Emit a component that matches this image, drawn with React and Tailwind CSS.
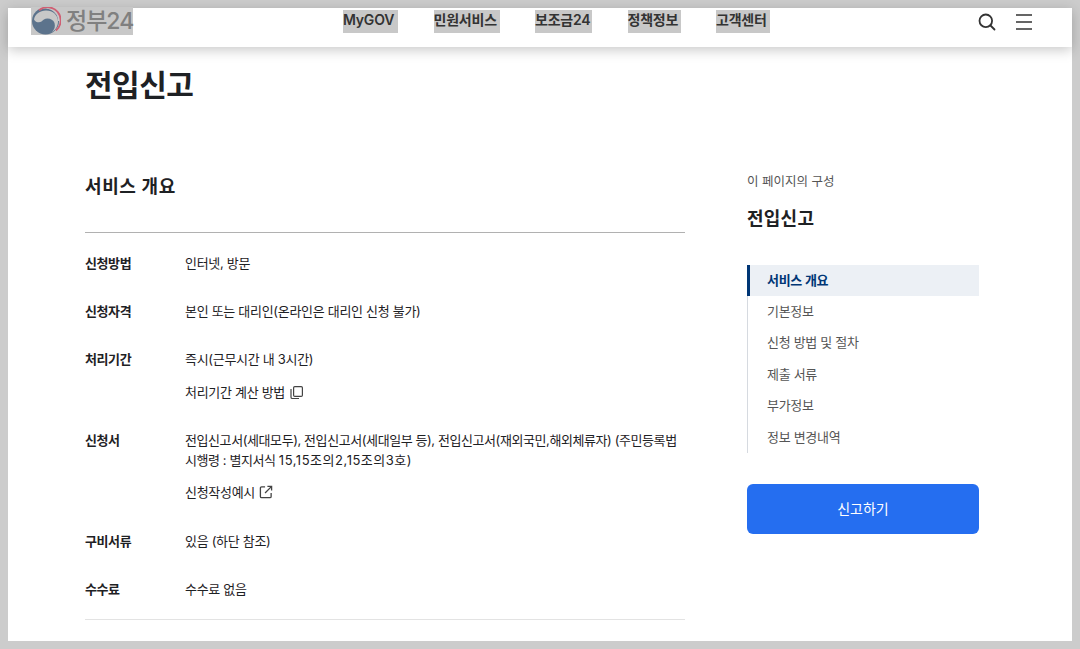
import React from "react";

const NAV = [
  { label: "MyGOV", width: "w-[55px]" },
  { label: "민원서비스", width: "w-[66px]" },
  { label: "보조금24", width: "w-[57px]" },
  { label: "정책정보", width: "w-[53px]" },
  { label: "고객센터", width: "w-[54px]" },
];
const TOC = ["기본정보", "신청 방법 및 절차", "제출 서류", "부가정보", "정보 변경내역"];

const CopyIcon = () => (
  <svg width="15" height="15" viewBox="0 0 15 15" fill="none" stroke="#444" strokeWidth="1.2" className="shrink-0">
    <rect x="4.6" y="1.6" width="8.8" height="9.8" rx="1.2" />
    <path d="M2 4v8.2c0 .8.5 1.3 1.3 1.3H10" />
  </svg>
);

const ExternalIcon = () => (
  <svg width="14" height="14" viewBox="0 0 15 15" fill="none" stroke="#444" strokeWidth="1.4" className="shrink-0">
    <path d="M6.5 2H2.8C2 2 1.500 2.500 1.500 3.300V12.200C1.500 13 2 13.500 2.800 13.500H11.700C12.500 13.500 13 13 13 12.200V8.500" />
    <path d="M9 1.500H13.500V6M13.500 1.500L6.500 8.500" />
  </svg>
);

const SearchIcon = () => (
  <svg width="18" height="18" viewBox="0 0 18 18" fill="none" stroke="#333" strokeWidth="1.8" strokeLinecap="round">
    <circle cx="7.800" cy="7.800" r="6.300" />
    <path d="M12.500 12.500L16.500 16.500" />
  </svg>
);

const MenuIcon = () => (
  <svg width="16" height="16" viewBox="0 0 16 16" fill="none" stroke="#333" strokeWidth="1.500">
    <path d="M0 1H16M0 8H16M0 15H16" />
  </svg>
);

const Logo = () => (
  <div className="-mt-px flex h-[28px] w-[102px] items-center bg-[#c8c8c8]">
    <svg width="30" height="28" viewBox="0 0 30 28" className="shrink-0">
      <circle cx="14.500" cy="14" r="13.500" fill="#5c738c" />
      <path d="M3 12.500C4 7 9 3.500 15 3.500C22 3.500 27 8 27 14.500C27 19 24.500 23 21 25C23.500 22.500 24.500 19.500 23.500 16C22.500 13 19.500 11.500 16.500 11.500C13.500 11.500 12 13 10.500 14.500C8.500 16 4.500 15.500 3 12.500Z" fill="#c8c8c8" />
      <path d="M28.500 14A14 14 0 0 0 7.500 2" fill="none" stroke="#c8c8c8" strokeWidth="3" />
      <path d="M8 3.300A13.200 13.200 0 0 1 25 23.500" fill="none" stroke="#cf5f73" strokeWidth="1.800" />
    </svg>
    <span className="ml-[5px] whitespace-nowrap text-[23px] font-medium leading-none tracking-[-1px] text-[#808080]">정부24</span>
  </div>
);

const Row = ({ label, className, children }) => (
  <div className={`flex ${className}`}>
    <div className="w-[100px] shrink-0 text-[13px] font-bold leading-[20px] tracking-[-0.4px] text-[#1e2124]">{label}</div>
    <div className="flex-1 text-[13px] leading-[20px] tracking-[-0.3px] text-[#1e2124]">{children}</div>
  </div>
);

export default function App() {
  return (
    <div className="h-[649px] overflow-hidden bg-[#cccccc] p-2 font-['Inter','Noto_Sans_CJK_KR',sans-serif]">
      <div className="h-full bg-white">
        <header className="relative flex h-[39px] items-start bg-white pl-[23px] pr-[40px] shadow-[0_3px_12px_rgba(0,0,0,0.22)]">
          <Logo />
          <nav className="ml-[210px] flex gap-[35.5px] pt-[2px]">
            {NAV.map((item) => (
              <span key={item.label} className={`flex h-[23px] items-center whitespace-nowrap bg-[#c8c8c8] pb-[3px] text-[14px] font-semibold leading-none tracking-[-0.2px] text-[#333333] ${item.width}`}>
                {item.label}
              </span>
            ))}
          </nav>
          <div className="ml-auto flex items-center gap-[20px] pt-[5px]">
            <SearchIcon />
            <MenuIcon />
          </div>
        </header>

        <main className="px-[77px]">
          <h1 className="mt-[17px] text-[30px] font-bold leading-[42px] tracking-[-0.5px] text-[#1e2124]">전입신고</h1>
          <div className="mt-[67px] flex">
            <section className="w-[600px] shrink-0">
              <h2 className="pt-px text-[18px] font-semibold leading-[26px] tracking-[0.6px] text-[#1e2124]">서비스 개요</h2>
              <div className="mt-[32px] border-t border-[#b1b1b1] pt-[20px]">
                <Row label="신청방법" className="mb-[28px]">인터넷, 방문</Row>
                <Row label="신청자격" className="mb-[28px]">본인 또는 대리인(온라인은 대리인 신청 불가)</Row>
                <Row label="처리기간" className="mb-[28px]">
                  <p>즉시(근무시간 내 3시간)</p>
                  <p className="mt-[13px] flex items-center gap-[4px]">처리기간 계산 방법 <CopyIcon /></p>
                </Row>
                <Row label="신청서" className="mb-[29px]">
                  <p className="tracking-[-0.42px]">전입신고서(세대모두), 전입신고서(세대일부 등), 전입신고서(재외국민,해외체류자) (주민등록법 시행령 : 별지서식 <span className="tracking-[0.52px]">15,15조의2,15조의3호)</span></p>
                  <p className="mt-[12px] flex items-center gap-[4px]">신청작성예시 <ExternalIcon /></p>
                </Row>
                <Row label="구비서류" className="mb-[28px]">있음 (하단 참조)</Row>
                <Row label="수수료">수수료 없음</Row>
              </div>
              <div className="mt-[20px] border-t border-[#e3e3e3]" />
            </section>

            <aside className="ml-[62px] w-[232px] shrink-0">
              <p className="text-[12.5px] leading-[18px] text-[#555555]">이 페이지의 구성</p>
              <h3 className="mt-[15px] text-[18px] font-semibold leading-[26px] tracking-[0.25px] text-[#1e2124]">전입신고</h3>
              <ul className="mt-[33px] border-l border-[#d6dae0]">
                <li className="-ml-px flex h-[31px] items-center border-l-[3px] border-[#003675] bg-[#ecf0f5] pl-[17px] text-[13px] font-semibold tracking-[-0.3px] text-[#003675]">서비스 개요</li>
                {TOC.map((item) => (
                  <li key={item} className="flex h-[31.4px] items-center pl-[19px] text-[13px] tracking-[-0.3px] text-[#555555]">{item}</li>
                ))}
              </ul>
              <button className="mt-[31px] h-[50px] w-full rounded-[6px] bg-[#256ef0] text-[14px] text-white">신고하기</button>
            </aside>
          </div>
        </main>
      </div>
    </div>
  );
}
